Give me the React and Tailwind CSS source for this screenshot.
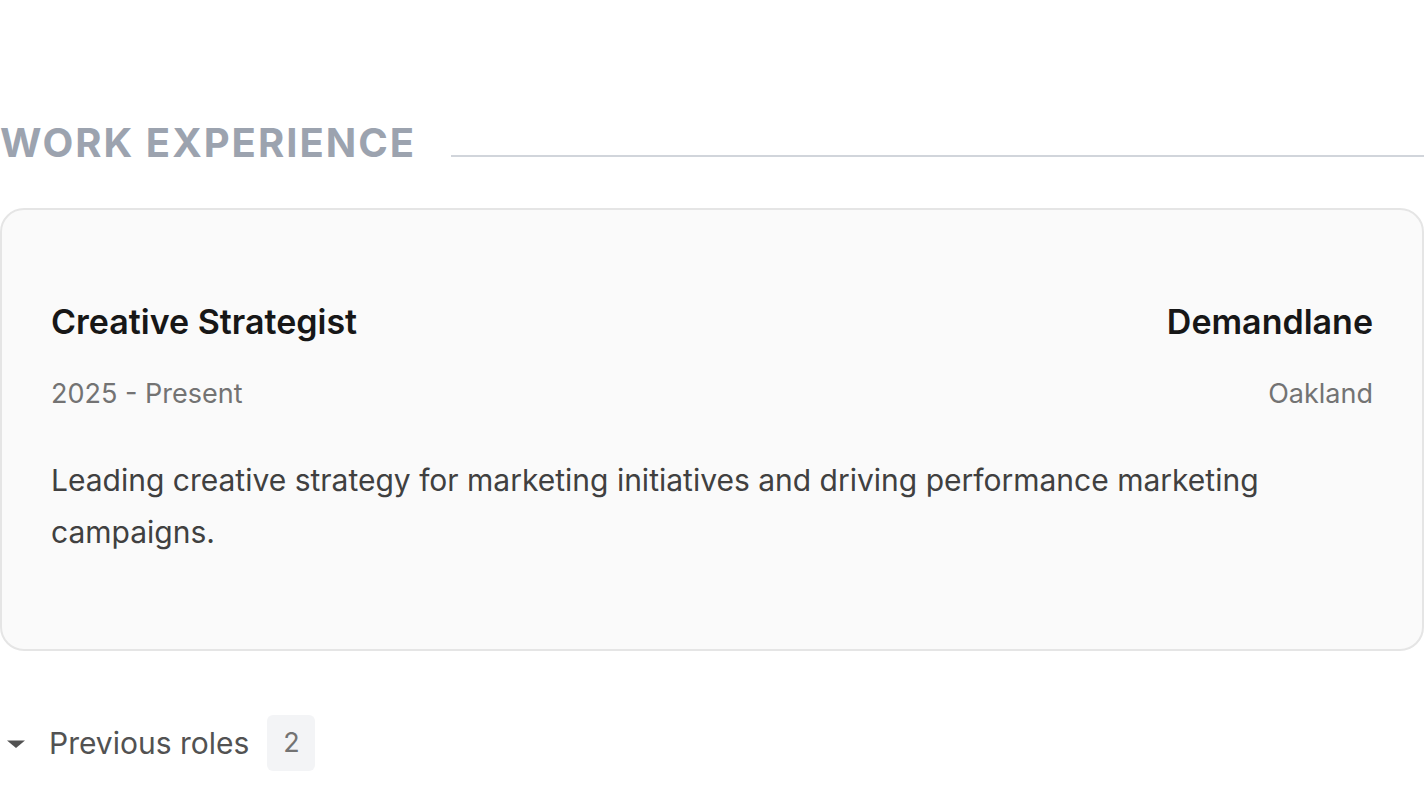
export default function App() {
  return (
    <div className="min-h-screen bg-white font-['Inter',sans-serif]">
      <div className="pt-[119px]">
        {/* Section heading */}
        <div className="flex items-end gap-[35px]">
          <h2 className="text-[40px] leading-[48px] font-bold tracking-[0.05em] text-[#9ca3af] whitespace-nowrap">WORK EXPERIENCE</h2>
          <div className="flex-1 h-[2px] bg-[#d1d5db] mb-[10px]" />
        </div>

        {/* Current role */}
        <div className="mt-[41px] border-2 border-[#e5e5e5] rounded-[24px] bg-[#fafafa] px-[49px] pt-[92px] pb-[91px]">
          <div className="flex items-baseline justify-between">
            <h3 className="text-[34px] leading-[40px] font-semibold text-[#171717]">Creative Strategist</h3>
            <span className="text-[34px] leading-[40px] font-semibold text-[#171717]">Demandlane</span>
          </div>
          <div className="mt-[36px] flex items-baseline justify-between text-[27px] leading-[32px] text-[#737373]">
            <span>2025 - Present</span>
            <span>Oakland</span>
          </div>
          <p className="mt-[44px] text-[30px] leading-[52px] text-[#404040] pr-[60px]">
            Leading creative strategy for marketing initiatives and driving performance marketing campaigns.
          </p>
        </div>

        {/* Previous roles toggle */}
        <button className="mt-[64px] flex items-center text-[#525252]">
          <svg width="26" height="24" viewBox="0 0 26 24">
            <path d="M7 9.5h18l-9 7.5z" fill="#525252" />
          </svg>
          <span className="ml-[23px] text-[30px] leading-[36px]">Previous roles</span>
          <span className="ml-[18px] flex items-center justify-center w-[48px] h-[56px] rounded-[6px] bg-[#f3f4f6] text-[27px] text-[#737373]">2</span>
        </button>
      </div>
    </div>
  )
}
